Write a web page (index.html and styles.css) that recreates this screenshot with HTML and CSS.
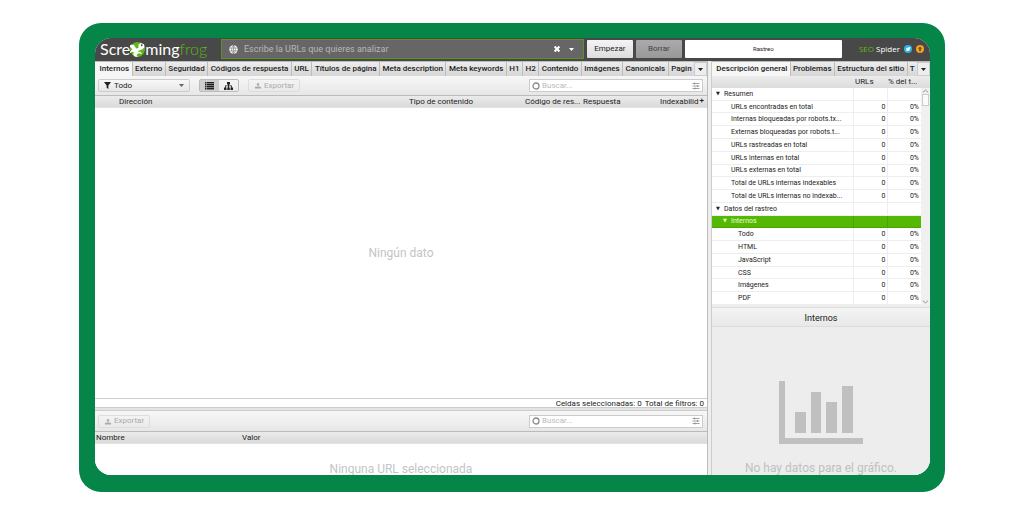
FILE: index.html
```html
<!DOCTYPE html>
<html lang="es">
<head>
<meta charset="utf-8">
<title>Screaming Frog SEO Spider</title>
<link rel="stylesheet" href="styles.css">
</head>
<body>
<svg width="0" height="0" class="defs" aria-hidden="true">
  <symbol id="export" viewBox="0 0 16 16"><path d="M8 1l4 5H9.500v4h-3V6H4zM1 11h14v4H1z"/></symbol>
  <symbol id="sliders" viewBox="0 0 16 16"><path d="M1 3h14M1 8h14M1 13h14M5 1v4M11 6v4M6 11v4" fill="none" stroke="currentColor" stroke-width="1.600"/></symbol>
  <symbol id="ring" viewBox="0 0 16 16"><circle cx="8" cy="8" r="6" fill="none" stroke="currentColor" stroke-width="2.600"/></symbol>
  <symbol id="caret" viewBox="0 0 10 10"><path d="M0 2h10L5 8z"/></symbol>
</svg>
<div class="frame">
<div class="app">
  <header class="topbar">
    <div class="logo"><span>Scre</span><svg class="frog" viewBox="0 0 32 32" aria-hidden="true"><circle cx="16" cy="16" r="16" fill="#62b51a"/><path d="M2 6l6 0 3 4 2 4 5-1 0-7 5-4 7 3 1 6-5 5-7 2-2 3 5 0 4 5-6-2-4 1-2 3 3 4-7-1-3-4 1-5-3-1-5 3 1-5 4-3-3-4-4-3z" fill="#fff"/><circle cx="25" cy="7" r="2" fill="#444"/></svg><span>ming</span><span class="green">frog</span></div>
    <div class="urlbar">
      <svg class="globe" viewBox="0 0 16 16" aria-hidden="true"><circle cx="8" cy="8" r="7.500" fill="#fff"/><path d="M1 5.500h14M1 10.500h14M8 0v16M8 .5c-4.500 4-4.500 11 0 15M8 .5c4.500 4 4.500 11 0 15" fill="none" stroke="#666" stroke-width="1"/></svg>
      <input type="text" aria-label="URL" placeholder="Escribe la URLs que quieres analizar">
      <button class="plain" aria-label="Limpiar"><svg viewBox="0 0 10 10"><path d="M2 2l6 6M8 2L2 8" stroke="#fff" stroke-width="2.600"/></svg></button>
      <button class="plain" aria-label="Historial"><svg class="caret"><use href="#caret"/></svg></button>
    </div>
    <button class="action">Empezar</button>
    <button class="action muted">Borrar</button>
    <div class="progress">Rastreo</div>
    <div class="brand"><span><span class="green">SEO</span> Spider</span>
      <svg class="badge" viewBox="0 0 20 20" aria-hidden="true"><circle cx="10" cy="10" r="10" fill="#2bb5e8"/><path d="M4 13c2 .2 3-.2 4-1-2 0-2.500-1-2.500-2L5 6c1.500 1.500 3 2.300 5 2.300C10 5 13 4.500 14.300 6L17 5.500 15.500 8C15.500 14 9 17 4 13z" fill="#fff"/></svg>
      <svg class="badge" viewBox="0 0 20 20" aria-hidden="true"><circle cx="10" cy="10" r="10" fill="#f7a01b"/><path d="M10 3.500l5 6h-3v6H8v-6H5z" fill="#5a4a30"/></svg>
    </div>
  </header>
  <div class="panes">
    <main class="left">
      <nav class="tabs">
        <button class="tab active">Internos</button><button class="tab">Externo</button><button class="tab">Seguridad</button><button class="tab">Códigos de respuesta</button><button class="tab">URL</button><button class="tab">Títulos de página</button><button class="tab">Meta description</button><button class="tab">Meta keywords</button><button class="tab">H1</button><button class="tab">H2</button><button class="tab">Contenido</button><button class="tab">Imágenes</button><button class="tab">Canonicals</button><button class="tab last">Pagin</button><button class="more" aria-label="Más pestañas"><svg class="caret"><use href="#caret"/></svg></button>
      </nav>
      <div class="toolbar">
        <label class="filter">
          <svg viewBox="0 0 12 12" aria-hidden="true"><path d="M0 0h12L7.500 6v6l-3-2V6z"/></svg>
          <select aria-label="Filtro"><option>Todo</option></select>
          <svg class="caret" aria-hidden="true"><use href="#caret"/></svg>
        </label>
        <div class="views">
          <button class="on" aria-label="Lista"><svg viewBox="0 0 18 16"><path d="M0 0h3v3H0zM4 0h14v3H4zM0 4h3v3H0zM4 4h14v3H4zM0 8h3v3H0zM4 8h14v3H4zM0 12h3v3H0zM4 12h14v3H4z"/></svg></button><button aria-label="Árbol"><svg viewBox="0 0 18 16"><path d="M6 0h6v5h-2v2h6v4h2v5h-5v-5h1.500V8.500H10V11h1.500v5h-5v-5H8V8.500H3.500V11H5v5H0v-5h2V7h6V5H6z"/></svg></button>
        </div>
        <button class="export"><svg><use href="#export"/></svg>Exportar</button>
        <label class="search"><svg><use href="#ring"/></svg><input type="text" aria-label="Buscar" placeholder="Buscar..."><svg><use href="#sliders"/></svg></label>
      </div>
      <table class="grid main-grid">
        <thead><tr><th class="c-num"></th><th class="c-dir">Dirección</th><th class="c-type">Tipo de contenido</th><th class="c-code">Código de res...</th><th class="c-resp">Respuesta</th><th class="c-idx">Indexabilid<b>+</b></th></tr></thead>
      </table>
      <div class="empty">Ningún dato</div>
      <div class="status"><span>Celdas seleccionadas: 0</span><span>Total de filtros: 0</span></div>
      <div class="split"></div>
      <div class="toolbar lower">
        <button class="export"><svg><use href="#export"/></svg>Exportar</button>
        <label class="search"><svg><use href="#ring"/></svg><input type="text" aria-label="Buscar detalles" placeholder="Buscar..."><svg><use href="#sliders"/></svg></label>
      </div>
      <table class="grid detail-grid">
        <thead><tr><th class="c-name">Nombre</th><th>Valor</th></tr></thead>
      </table>
      <div class="empty-detail">Ninguna URL seleccionada</div>
    </main>
    <aside class="right">
      <nav class="tabs">
        <button class="tab active">Descripción general</button><button class="tab">Problemas</button><button class="tab">Estructura del sitio</button><button class="tab last">T</button><button class="more" aria-label="Más pestañas"><svg class="caret"><use href="#caret"/></svg></button>
      </nav>
      <div class="tree-head"><span></span><span>URLs</span><span>% del t...</span></div>
      <div class="tree-wrap">
        <table class="tree">
          <tbody>
            <tr class="l0"><td><i>▼</i>Resumen</td><td></td><td></td></tr>
            <tr class="l1"><td>URLs encontradas en total</td><td>0</td><td>0%</td></tr>
            <tr class="l1"><td>Internas bloqueadas por robots.tx...</td><td>0</td><td>0%</td></tr>
            <tr class="l1"><td>Externas bloqueadas por robots.t...</td><td>0</td><td>0%</td></tr>
            <tr class="l1"><td>URLs rastreadas en total</td><td>0</td><td>0%</td></tr>
            <tr class="l1"><td>URLs internas en total</td><td>0</td><td>0%</td></tr>
            <tr class="l1"><td>URLs externas en total</td><td>0</td><td>0%</td></tr>
            <tr class="l1"><td>Total de URLs internas indexables</td><td>0</td><td>0%</td></tr>
            <tr class="l1"><td>Total de URLs internas no indexab...</td><td>0</td><td>0%</td></tr>
            <tr class="l0"><td><i>▼</i>Datos del rastreo</td><td></td><td></td></tr>
            <tr class="sel"><td><i>▼</i>Internos</td><td></td><td></td></tr>
            <tr class="l2"><td>Todo</td><td>0</td><td>0%</td></tr>
            <tr class="l2"><td>HTML</td><td>0</td><td>0%</td></tr>
            <tr class="l2"><td>JavaScript</td><td>0</td><td>0%</td></tr>
            <tr class="l2"><td>CSS</td><td>0</td><td>0%</td></tr>
            <tr class="l2"><td>Imágenes</td><td>0</td><td>0%</td></tr>
            <tr class="l2"><td>PDF</td><td>0</td><td>0%</td></tr>
          </tbody>
        </table>
        <div class="scroll" aria-hidden="true">
          <svg viewBox="0 0 8 4"><path d="M1 3.500L4 1l3 2.500" fill="none" stroke="#888"/></svg>
          <div class="thumb"></div>
          <svg viewBox="0 0 8 4"><path d="M1 .5L4 3 7 .5" fill="none" stroke="#888"/></svg>
        </div>
      </div>
      <h2 class="chart-title">Internos</h2>
      <div class="chart">
        <svg viewBox="0 0 84 63" aria-hidden="true"><path d="M0 0h6v57h78v6H0zM16 31h11v21H16zM32 11h10v41H32zM47 21h11v31H47zM63 5h11v47H63z"/></svg>
        <p>No hay datos para el gráfico.</p>
      </div>
    </aside>
  </div>
</div>
</div>
</body>
</html>
```
FILE: styles.css
```css
* { box-sizing: border-box; }
body {
  margin: 0;
  height: 100vh;
  display: flex;
  padding: 23px 79px 20px;
  background: #fff;
  font: 8px/10px Roboto, "Liberation Sans", sans-serif;
  color: #222;
}
button, input, select { font: inherit; color: inherit; margin: 0; padding: 0; border: 0; background: none; }
svg { flex: none; display: block; fill: currentColor; }
.defs { position: absolute; }
.frame { flex: 1; display: flex; padding: 15px 15px 17px 16px; background: #058547; border-radius: 22px; min-width: 0; }
.app { flex: 1; display: flex; flex-direction: column; border-radius: 16px; overflow: hidden; background: #fff; min-width: 0; }
.green { color: #5fb812; }
.caret { width: 5px; height: 5px; }

.topbar { display: flex; align-items: center; height: 23px; background: #484848; padding: 0 6px 1px 5px; flex: none; }
.logo { display: flex; align-items: center; width: 121px; flex: none; color: #fff; font: 400 16px/18px Lato, sans-serif; }
.logo .green { font-weight: 300; }
.frog { width: 15px; height: 15px; }
.urlbar { flex: 1; display: flex; align-items: center; height: 20px; border: 1px solid #5a9420; background: #666; padding: 0 7px; margin-right: 3px; }
.globe { width: 9px; height: 9px; }
.urlbar input { flex: 1; min-width: 0; margin-left: 6px; font-size: 9px; line-height: 14px; outline: 0; }
.urlbar input::placeholder { color: #b8b8b8; opacity: 1; }
.plain { color: #fff; width: 8px; margin-left: 7px; display: flex; justify-content: center; }
.plain svg:not(.caret) { width: 8px; height: 8px; }
.action { width: 46px; height: 18px; flex: none; margin-right: 3px; border-radius: 1px; background: linear-gradient(#f4f4f4, #ddd); }
.action.muted { background: linear-gradient(#aaa, #999); color: #444; }
.progress { width: 157px; height: 18px; background: #fff; border-radius: 1px; display: flex; align-items: center; justify-content: center; font-size: 6px; }
.brand { display: flex; align-items: center; gap: 4px; margin-left: auto; padding-left: 17px; color: #fff; font: 8px/12px "Open Sans", sans-serif; white-space: nowrap; }
.badge { width: 8px; height: 8px; }

.panes { flex: 1; display: flex; min-height: 0; background: #eee; }
.left { flex: 1; min-width: 0; display: flex; flex-direction: column; border-right: 1px solid #bbb; }
.right { width: 219px; flex: none; margin-left: 3px; border-left: 1px solid #ccc; display: flex; flex-direction: column; background: #ededed; }
.tabs { display: flex; height: 15px; flex: none; background: linear-gradient(#ececec, #d6d6d6); border-top: 1px solid #bbb; }
.tab { flex: 1 0 auto; border-right: 1px solid #bcbcbc; padding: 0 2px; font-weight: 500; line-height: 14px; white-space: nowrap; text-align: center; }
.tab.active { background: #f6f6f6; padding-left: 4px; }
.tab.last { border: 0; }
.more { width: 13px; flex: none; display: flex; align-items: center; justify-content: center; background: #eee; border: 1px solid #ccc; }

.toolbar { display: flex; align-items: center; height: 19px; flex: none; padding: 0 4px 0 3px; background: linear-gradient(#f7f7f7, #e7e7e7); }
.lower { height: 20px; }
.filter { display: flex; align-items: center; width: 92px; height: 13px; padding: 0 5px; border: 1px solid #ccc; border-radius: 2px; background: linear-gradient(#f8f8f8, #e6e6e6); }
.filter .caret { color: #666; }
.filter svg:first-child { width: 7px; height: 7px; }
.filter select { flex: 1; appearance: none; margin-left: 3px; outline: 0; }
.views { display: flex; margin: 0 9px; height: 13px; border: 1px solid #bbb; border-radius: 2px; }
.views button { width: 19px; display: flex; align-items: center; justify-content: center; }
.views svg { width: 9px; height: 8px; }
.views .on { background: #cfcfcf; }
.export { display: flex; align-items: center; gap: 2px; height: 13px; padding: 0 5px; border: 1px solid #ddd; border-radius: 2px; color: #aaa; }
.export svg { width: 8px; height: 7px; }
.search { display: flex; align-items: center; width: 174px; height: 13px; margin-left: auto; padding: 0 2px; border: 1px solid #ccc; background: #fff; color: #888; }
.search svg { width: 8px; height: 8px; }
.search input { flex: 1; min-width: 0; margin-left: 2px; outline: 0; }
.search input::placeholder { color: #bbb; opacity: 1; }

.grid { width: 100%; table-layout: fixed; border-collapse: collapse; flex: none; background: linear-gradient(#ebebeb, #d9d9d9); border-top: 1px solid #bbb; }
.grid th { height: 12px; padding: 0; text-align: left; font-weight: 400; white-space: nowrap; line-height: 12px; }
.c-num { width: 24px; }
.c-type { width: 116px; }
.c-code { width: 58px; }
.c-resp { width: 77px; }
.c-idx { width: 47px; }
.c-idx b { margin-left: 1px; font-weight: 500; vertical-align: 1px; line-height: 8px; }
.empty { flex: 1; display: flex; align-items: center; justify-content: center; color: #c4c4c4; font-size: 12px; background: #fff; }
.status { display: flex; gap: 3px; justify-content: flex-end; height: 10px; line-height: 9px; padding-right: 3px; border-top: 1px solid #ccc; border-bottom: 1px solid #ccc; background: #fff; flex: none; }
.split { height: 3px; background: #e4e4e4; border-bottom: 1px solid #ccc; flex: none; }
.c-name { width: 146px; }
.detail-grid th { padding-left: 1px; }
.empty-detail { height: 31px; flex: none; padding-top: 19px; line-height: 12px; text-align: center; color: #c4c4c4; font-size: 12px; background: #fff; }

.tree-head { display: grid; grid-template-columns: 1fr 33px 42px; height: 12px; flex: none; background: linear-gradient(#ececec, #dcdcdc); line-height: 11px; }
.tree-wrap { display: flex; height: 217px; flex: none; background: #fff; }
.tree { flex: 1; height: 217px; table-layout: fixed; border-collapse: collapse; font-size: 7px; line-height: 10px; }
.tree td { padding: 0 1px 0 0; border-bottom: 1px solid #eee; white-space: nowrap; overflow: hidden; }
.tree td + td { width: 34px; border-left: 1px solid #eee; text-align: right; }
.tree td:last-child { padding-right: 2px; }
.tree i { display: inline-block; width: 8px; font: 5px/8px "DejaVu Sans", sans-serif; vertical-align: 1px; }
.tree .l0 td:first-child { padding-left: 4px; }
.tree .l1 td:first-child { padding-left: 19px; }
.tree .l2 td:first-child { padding-left: 26px; }
.tree .sel td { background: #54b804; border-color: #49a600; color: #e8ffd6; }
.tree .sel td:first-child { padding-left: 11px; }
.scroll { width: 9px; flex: none; display: flex; flex-direction: column; align-items: center; background: #f0f0f0; }
.scroll svg { width: 7px; height: 4px; margin: 1px 0; }
.thumb { width: 7px; height: 12px; background: #fafafa; border: 1px solid #ccc; margin-bottom: auto; }
.chart-title { margin: 2px 0 0; height: 20px; flex: none; text-align: center; font-size: 9px; font-weight: 400; line-height: 20px; border: 1px solid #ddd; border-width: 1px 0; background: linear-gradient(#f4f4f4, #e8e8e8); }
.chart { flex: 1; display: flex; flex-direction: column; align-items: center; justify-content: flex-end; color: #c0c0c0; font-size: 12px; line-height: 14px; }
.chart svg { width: 84px; height: 63px; }
.chart p { margin: 17px 0 0; }
```
